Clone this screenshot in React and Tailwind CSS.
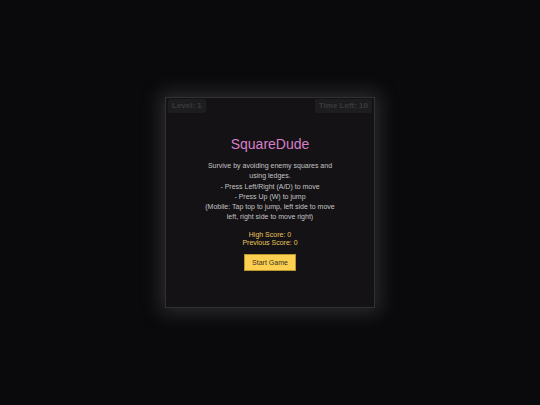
import React from "react";

export default function App() {
  return (
    <div
      className="w-[540px] h-[405px] bg-[#0a0a0c] flex items-center justify-center"
      style={{ fontFamily: '"Liberation Sans", Arial, sans-serif' }}
    >
      <div className="w-[210px] h-[211px] bg-[#141215] border border-[#313133] shadow-[0_0_18px_5px_rgba(120,120,120,0.3)] flex flex-col">
        <div className="flex justify-between px-[2px] pt-[1px]">
          <div className="bg-[#1d1d1f] text-[#3a3a3c] font-bold text-[8px] leading-[14px] px-[4px] rounded-[2px]">
            Level: 1
          </div>
          <div className="bg-[#1d1d1f] text-[#3a3a3c] font-bold text-[8px] leading-[14px] px-[4px] rounded-[2px]">
            Time Left: 10
          </div>
        </div>
        <div className="flex flex-col items-center mt-[23px]">
          <div className="text-[14px] leading-[16px] text-[#d77fc9]">SquareDude</div>
          <div className="mt-[9px] w-[130px] text-center text-[7px] leading-[10.3px] text-[#c4c4c4]">
            Survive by avoiding enemy squares and using ledges.
            <br />- Press Left/Right (A/D) to move
            <br />- Press Up (W) to jump
            <br />(Mobile: Tap top to jump, left side to move left, right side to move right)
          </div>
          <div className="mt-[8px] text-center text-[7px] leading-[8.5px] text-[#e8c75a]">
            High Score: 0
            <br />
            Previous Score: 0
          </div>
          <button className="mt-[6px] w-[52px] h-[17px] bg-[#fdd052] border border-[#b8962e] text-[#3a3320] text-[7px] leading-none">
            Start Game
          </button>
        </div>
      </div>
    </div>
  );
}
